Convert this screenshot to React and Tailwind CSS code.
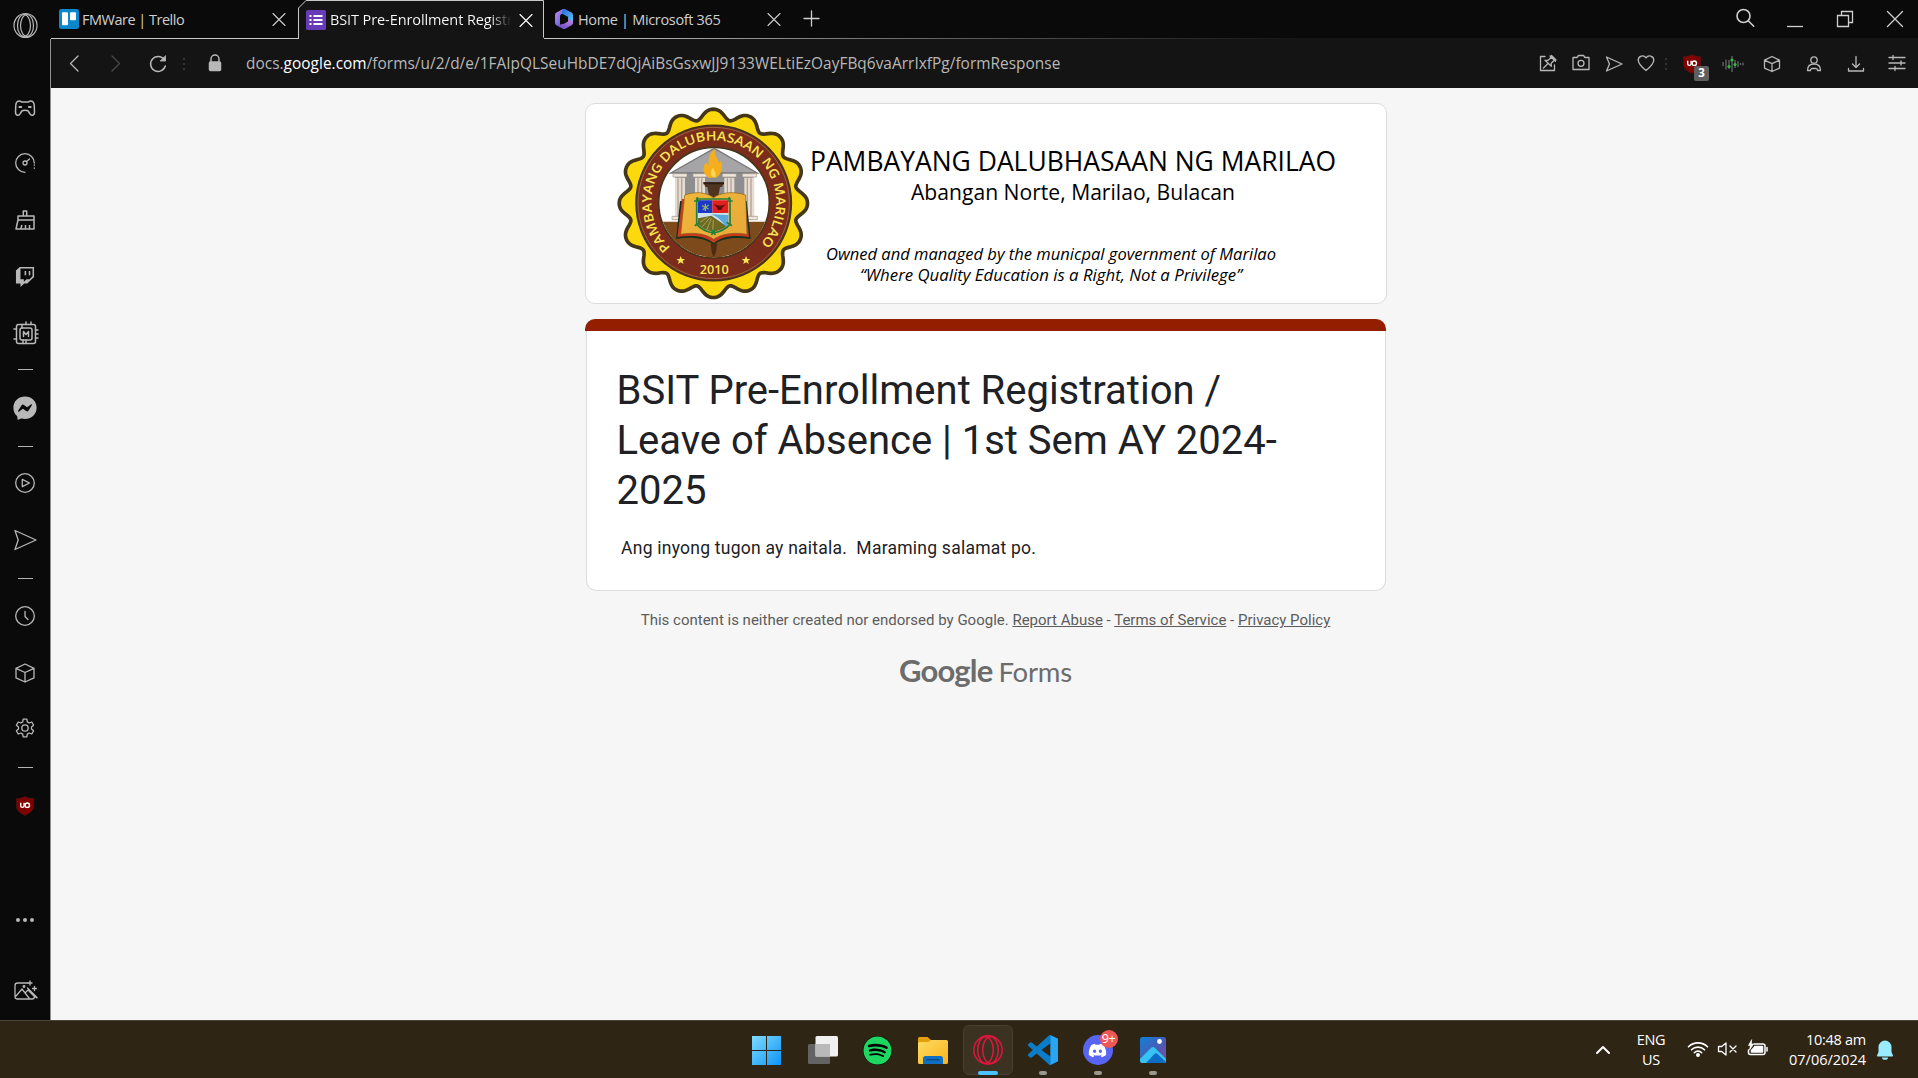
import React from "react";
import { FaTwitch, FaFacebookMessenger, FaSpotify, FaDiscord } from "react-icons/fa";

const line = {
  fill: "none",
  stroke: "currentColor",
  strokeWidth: 1.3,
  strokeLinecap: "round",
  strokeLinejoin: "round",
};

function Icon({ className = "", children, ...rest }) {
  return (
    <svg viewBox="0 0 24 24" className={`h-6 w-6 shrink-0 ${className}`} {...line} {...rest}>
      {children}
    </svg>
  );
}

const Close = ({ className = "" }) => (
  <Icon className={className} strokeWidth="1.1">
    <path d="M6 6.500l12 12M18 6.500L6 18.500" />
  </Icon>
);

const Cube = ({ className = "" }) => (
  <Icon className={className}>
    <path d="M12 3l9 4.3v9.6L12 21l-9-4.1V7.3zM3 7.3l9 4.2 9-4.2M12 11.5V21" />
  </Icon>
);

const Send = ({ className = "" }) => (
  <Icon className={className}>
    <path d="M2 2.5L23 12 2 21.5 5.2 12z" />
  </Icon>
);

const UBlock = ({ className = "" }) => (
  <svg viewBox="0 0 20 20" className={`shrink-0 ${className}`}>
    <path d="M10 .6c2.600 1.600 5.400 2 8.600 2v7.600c0 4-3.200 6.600-8.600 9.200-5.400-2.600-8.600-5.200-8.600-9.200V2.600c3.200 0 6-.4 8.600-2z" fill="#800000" stroke="#4a1a1a" strokeWidth=".6" />
    <path d="M5.700 6.800v2.900a1.700 1.700 0 003.400 0V6.800" fill="none" stroke="#fff" strokeWidth="1.400" />
    <circle cx="12.300" cy="9.200" r="2.200" fill="none" stroke="#fff" strokeWidth="1.400" />
  </svg>
);

const Dash = ({ className = "" }) => <div className={`h-px w-[15px] shrink-0 bg-[#b4b4b4] ${className}`} />;

function Sidebar() {
  return (
    <aside className="flex w-[51px] shrink-0 flex-col items-center bg-[#0a0a0a] pr-px text-[#b8b8b8]">
      <Icon className="mt-[13px] overflow-visible" strokeWidth="1.2">
        <ellipse cx="12.500" cy="12.500" rx="11.500" ry="12" />
        <ellipse cx="11" cy="12.500" rx="6.500" ry="11" />
        <ellipse cx="14" cy="12.500" rx="6.500" ry="11" />
      </Icon>
      <Icon className="mt-[59px] -ml-px" strokeWidth="1.500">
        <path d="M6.500 5C4 5 3 6.500 2.800 9L2.500 16c0 4 3.500 4.300 4.800 1.500L8.800 15c.8-1 5.600-1 6.400 0l1.500 2.500c1.300 2.800 4.800 2.500 4.800-1.500l-.3-7c-.2-2.500-1.200-4-3.700-4-1.500 0-1.600 1-2.700 1H9.200C8.100 6 8 5 6.500 5z" />
        <path d="M6.500 11h1.600M16 11h1.600" strokeWidth="2.200" />
      </Icon>
      <Icon className="mt-[31px] -ml-px">
        <path d="M12 21.300A9.300 9.300 0 1121.300 12" />
        <circle cx="12" cy="12" r="2" />
        <path d="M13.500 10.500L16.500 8M21.300 14v.3M21.300 17v.3" />
      </Icon>
      <Icon className="mt-[33px]" strokeLinecap="butt" strokeWidth="1.500">
        <path d="M10.300 8V3h3.400v5M5 8h16v4H5zM5 12L3 21h18v-9M8 21l.8-4M12.500 21v-4M16.500 21v-4" />
      </Icon>
      <FaTwitch className="mt-[33px] h-6 w-6 shrink-0 px-[2px]" />
      <Icon className="mt-[33px] ml-[2px] overflow-visible" strokeWidth="1.500">
        <rect x="2.500" y="2.500" width="19" height="19" rx="2" />
        <rect x="6" y="6" width="12" height="12" rx="2" />
        <path d="M9.500 14.500v-5l2.500 3 2.500-3v5M12 0v2.500M17 0v2.500M0 7h2.500M0 17h2.500M21.500 8H24M21.500 12H24M21.500 16H24M9 18v3.500M12 18v3.500M8 2.500V6" />
      </Icon>
      <Dash className="mt-[23px]" />
      <FaFacebookMessenger className="mt-[26px] h-6 w-6 shrink-0" />
      <Dash className="mt-[26px]" />
      <Icon className="mt-6 -ml-px">
        <circle cx="12" cy="12" r="9.300" />
        <path d="M9.300 8.300l7.200 3.700-7.200 3.700z" />
      </Icon>
      <Send className="mt-[33px]" />
      <Dash className="mt-[26px]" />
      <Icon className="mt-[25px] -ml-px">
        <circle cx="12" cy="12" r="9.300" />
        <path d="M12 7.500v5l3 3" />
      </Icon>
      <Cube className="mt-[33px] -ml-px" />
      <Icon className="mt-[31px] -ml-px">
        <path d="M10.200 3.200h3.600l.5 2.700 1.900 1.100 2.600-1 1.800 3.200-2.100 1.700v2.200l2.100 1.700-1.800 3.200-2.600-1-1.900 1.100-.5 2.700h-3.600l-.5-2.700L7.800 17l-2.600 1-1.800-3.200 2.100-1.700v-2.200L3.400 9.200 5.200 6l2.600 1 1.900-1.100z" />
        <circle cx="12" cy="12" r="3.200" />
      </Icon>
      <Dash className="mt-[27px]" />
      <UBlock className="mt-[28px] h-5 w-5" />
      <Icon className="mt-[92px]" fill="currentColor" stroke="none">
        <circle cx="5" cy="12" r="2" />
        <circle cx="12" cy="12" r="2" />
        <circle cx="19" cy="12" r="2" />
      </Icon>
      <Icon className="mt-[47px] overflow-visible">
        <path d="M15 4H4.500A2.500 2.500 0 002 6.500v11A2.500 2.500 0 004.500 20H19a2.500 2.500 0 002.500-2M3 17l6-7 7 9M12 14l3-3 6 6 3 2M14.500 9L24 18.500" />
        <circle cx="11" cy="7.500" r=".8" fill="currentColor" />
        <path d="M17 2v4M15 4h4M21.500 7.500v4M19.500 9.500h4" />
      </Icon>
    </aside>
  );
}

function TabStrip() {
  const tabText = "whitespace-nowrap font-['Open_Sans',sans-serif] text-[14.5px] leading-5";
  return (
    <div className="flex h-[39px] shrink-0 bg-[#0a0a0a] text-[#cfcfcf]">
      <div className="flex w-[247px] shrink-0 items-center border-b border-[#c8c8c8] pl-2">
        <svg viewBox="0 0 20 20" className="h-5 w-5 shrink-0">
          <rect width="20" height="20" rx="2.500" fill="#0c87cc" />
          <rect x="3" y="3.200" width="6" height="13" rx="1" fill="#fff" />
          <rect x="11" y="3.200" width="6" height="8" rx="1" fill="#fff" />
        </svg>
        <span className={`ml-[3px] pt-px tracking-[-0.5px] ${tabText}`}>FMWare | Trello</span>
        <Close className="mr-[7px] ml-auto" />
      </div>
      <div className="relative flex w-[246px] shrink-0 items-center bg-[#141414] pl-2">
        <svg viewBox="0 0 246 39" className="absolute inset-0 h-[39px] w-[246px]">
          <path d="M0 0h7.500L0 8z" fill="#0a0a0a" />
          <path d="M.5 39V8L8 .5h237.500V37l1 1.500" fill="none" stroke="#c8c8c8" />
        </svg>
        <svg viewBox="0 0 20 20" className="relative h-5 w-5 shrink-0">
          <rect width="20" height="20" rx="1.500" fill="#673ab7" />
          <path d="M7.500 6h9M7.500 10h9M7.500 14h9M3.500 6h2M3.500 10h2M3.500 14h2" stroke="#fff" strokeWidth="2" />
        </svg>
        <span className={`relative ml-1 w-[182px] overflow-hidden bg-linear-to-r from-white from-88% to-[#141414] bg-clip-text tracking-[-0.1px] text-transparent ${tabText}`}>
          BSIT Pre-Enrollment Registr
        </span>
        <Close className="relative mr-1.5 ml-auto text-white" />
      </div>
      <div className="flex flex-1 flex-col">
        <div className="flex flex-1 items-center">
          <svg viewBox="0 0 20 20" className="ml-[10px] h-5 w-5 shrink-0">
            <defs>
              <linearGradient id="mA" x1="0" y1="0" x2="1" y2="1">
                <stop offset="0" stopColor="#c58af0" />
                <stop offset="1" stopColor="#3b5bd0" />
              </linearGradient>
              <linearGradient id="mB" x1="0" y1="0" x2="1" y2="1">
                <stop offset="0" stopColor="#2c66d8" />
                <stop offset="1" stopColor="#58c8f4" />
              </linearGradient>
              <linearGradient id="mC" x1="0" y1="1" x2="1" y2="0">
                <stop offset="0" stopColor="#5a3fb8" />
                <stop offset="1" stopColor="#c58ce8" />
              </linearGradient>
            </defs>
            <path d="M9 0L2.500 3.600Q1 4.500 1 6.200v7.600q0 1.700 1.500 2.500l3.500 2V7.500Q6 5.800 7.500 5L12 2.400z" fill="url(#mA)" />
            <path d="M9 0q1.200-.5 2.400.2l6.100 3.400Q19 4.500 19 6.200V13l-5-3V7.800L8 4.700V3z" fill="url(#mB)" />
            <path d="M2.500 16.300l6.100 3.400q1.400.7 2.800 0l6.100-3.400Q19 15.500 19 13.800V12l-5-2v2.500l-4 2.300z" fill="url(#mC)" />
          </svg>
          <span className={`ml-1 pt-px tracking-[-0.33px] ${tabText}`}>Home | Microsoft 365</span>
          <Close className="ml-[41px]" />
          <Icon className="mb-[3px] ml-[13px]">
            <path d="M12.500 5v15M5 12.500h15" />
          </Icon>
          <Icon className="mr-[26px] mb-0.5 ml-auto" strokeWidth="1.600">
            <circle cx="10.500" cy="10" r="6.500" />
            <path d="M15.200 14.700l5.500 5.500" />
          </Icon>
          <Icon className="mr-[26px]" strokeLinecap="butt">
            <path d="M4 19.500h16" />
          </Icon>
          <Icon className="mr-[26px]" strokeLinejoin="miter">
            <path d="M4.500 8.500h11v11h-11zM8.500 8.500v-4h11v11h-4" />
          </Icon>
          <Icon className="mr-[11px]">
            <path d="M4.500 4.500l15 15M19.500 4.500l-15 15" />
          </Icon>
        </div>
        <div className="h-px bg-linear-to-r from-[#c8c8c8] to-[#141414] to-55%" />
      </div>
    </div>
  );
}

const Grip = ({ className = "" }) => (
  <div className={`flex w-0.5 flex-col gap-[3px] ${className}`}>
    <i className="h-0.5 bg-[#333]" />
    <i className="h-0.5 bg-[#333]" />
    <i className="h-0.5 bg-[#333]" />
  </div>
);

function Toolbar() {
  return (
    <div className="flex h-[49px] shrink-0 items-center bg-[#141414] pl-3 text-[#b8b8b8]">
      <Icon>
        <path d="M15 4L7.500 11.500 15 19" />
      </Icon>
      <Icon className="ml-4 text-[#484848]">
        <path d="M9 4l7.500 7.500L9 19" />
      </Icon>
      <Icon className="ml-[19px]" strokeWidth="1.500">
        <path d="M18.500 8a7.500 7.500 0 10.800 6" />
        <path d="M19.500 4v5h-5z" fill="currentColor" strokeWidth=".8" />
      </Icon>
      <Grip className="ml-[13px]" />
      <Icon className="mb-0.5 ml-[18px]" strokeWidth="1.500">
        <rect x="6.500" y="11" width="11" height="8.500" rx="1" fill="currentColor" />
        <path d="M8 11V8a4 4 0 018 0v3" />
      </Icon>
      <span className="ml-[19px] pt-px font-['Open_Sans',sans-serif] text-[15.4px] leading-6 tracking-[0.035px] whitespace-nowrap">
        docs.<span className="text-white">google.com</span>/forms/u/2/d/e/1FAIpQLSeuHbDE7dQjAiBsGsxwJJ9133WELtiEzOayFBq6vaArrIxfPg/formResponse
      </span>
      <div className="ml-auto flex items-center pr-[9px]">
        <Icon className="mr-[9px] mb-px">
          <path d="M9 5.500H4.500v14h14V14" />
          <path d="M14 5l5.500 5.200M15.500 4.500l4.500 4.500-1.800.3-3 3 .1 3-6.300-6 3 .1 3.200-3.200zM12 12.500l-4.500 4.500" />
        </Icon>
        <Icon className="mr-[9px] mb-px">
          <path d="M4 6.500h4l1.500-2h5l1.500 2h4v12H4z" />
          <circle cx="12" cy="12.300" r="3" />
        </Icon>
        <Icon className="mr-2">
          <path d="M4.500 5L20 12 4.500 19 7.500 12z" />
        </Icon>
        <Icon className="mb-0.5">
          <path d="M12 19.500C7 15.500 4.200 12.500 4.200 9A4.200 4.200 0 0112 7a4.200 4.200 0 017.800 2c0 3.500-2.800 6.500-7.800 10.500z" />
        </Icon>
        <Grip className="ml-[7px]" />
        <div className="relative ml-[13px] flex h-6 w-6 items-center justify-center">
          <UBlock className="h-5 w-5" />
          <span className="absolute top-[14px] left-[14px] flex h-[15px] w-[15px] items-center justify-center rounded-[2px] bg-[#5f5f5f] font-['Open_Sans',sans-serif] text-[11.5px] font-bold text-white">
            3
          </span>
        </div>
        <Icon className="ml-4 text-[#666]" strokeLinecap="butt" strokeWidth="1.300">
          <path d="M3 10v4M6 7.500v10M9 8v9M12 4v16M15 8v8M18 9v6M20.500 11v2M23 10.500v3" />
          <g fill="#2bbf3c" stroke="none">
            <circle cx="9" cy="14.500" r="1.600" />
            <circle cx="12" cy="8" r="1.600" />
            <circle cx="15" cy="12.500" r="1.600" />
          </g>
        </Icon>
        <svg viewBox="0 0 24 24" className="ml-4 h-5 w-6" {...line} strokeWidth="1.500">
          <path d="M12 3l9 4.300v9.600L12 21l-9-4.100V7.300zM3 7.300l9 4.200 9-4.200M12 11.500V21" />
        </svg>
        <Icon className="ml-[18px]">
          <circle cx="12" cy="8" r="3.200" />
          <path d="M5.500 18.500c0-4.500 2.500-6.500 6.500-6.500s6.500 2 6.500 6.500h-3c0-1-.8-2-1.500-2h-4c-.7 0-1.500 1-1.500 2z" />
        </Icon>
        <Icon className="ml-[18px]">
          <path d="M12 4.500v11M8.500 12l3.500 3.500 3.500-3.500M4.500 16.500v2.500h15v-2.500" />
        </Icon>
        <Icon className="mb-px ml-[17px]">
          <path d="M4 6.500h16M4 12h16M4 17.500h16M8 4.500v4M16 10v4M10 15.500v4" />
        </Icon>
      </div>
    </div>
  );
}

/* Scalloped rosette outline: lobes with flattened crests around the seal's centre. */
const scallop =
  Array.from({ length: 320 }, (_, i) => {
    const a = (i / 320) * Math.PI * 2;
    const r = 269.5 + 15 * Math.cos(16 * a) - 2 * Math.cos(32 * a);
    return `${i ? "L" : "M"}${(400 + r * Math.sin(a)).toFixed(1)} ${(325 - r * Math.cos(a)).toFixed(1)}`;
  }).join("") + "Z";

const STAR = "M0-13L3.500-4H13L5.500 2 8.500 11 0 5.500-8.500 11-5.500 2-13-4H-3.500z";

function Seal(props) {
  return (
    <svg viewBox="110 35 580 580" {...props}>
      <defs>
        <clipPath id="sealInner">
          <circle cx="402" cy="323" r="164" />
        </clipPath>
        <path id="sealArc" d="M271.800 457.800A187 187 0 1 1 531 457.800" />
        <linearGradient id="page" x1="0" y1="0" x2="1" y2="1">
          <stop offset="0" stopColor="#f0b83c" />
          <stop offset="1" stopColor="#e8a838" />
        </linearGradient>
      </defs>
      <path d={scallop} fill="#fcd90c" stroke="#43361a" strokeWidth="11" />
      <circle cx="401" cy="324" r="233" fill="#7b2c1b" stroke="#43361a" strokeWidth="5" />
      <circle cx="401" cy="324" r="227" fill="none" stroke="#a8805c" strokeWidth="2" />
      <circle cx="402" cy="323" r="166" fill="#fff" stroke="#43361a" strokeWidth="5" />
      <g clipPath="url(#sealInner)">
        <path d="M230 380h345v120H230z" fill="#7d4a1c" />
        <path d="M285 235h235v140H285z" fill="#8e8e90" />
        <path d="M403 160L532 234H272z" fill="#a5a5a8" stroke="#77777a" strokeWidth="4" />
        {[300, 360, 448, 508].map((x) => (
          <g key={x}>
            <path d={`M${x - 15} 248h30v116h-30z`} fill="#e6ddd2" />
            <path d={`M${x - 6} 250v114M${x + 5} 250v114`} stroke="#b3a294" strokeWidth="4" />
            <path d={`M${x - 21} 236h42v10h-42zM${x - 24} 364h48v10h-48z`} fill="#efe7dc" stroke="#a39384" strokeWidth="2" />
          </g>
        ))}
        <path d="M392 445h20l-4 26-7 16-6-16z" fill="#4e2b12" />
      </g>
      <path d="M370 262h62l-6 14h-6l-6 32h-26l-6-32h-6z" fill="#4f3420" />
      <path d="M370 262h62v6h-62z" fill="#2f1e12" />
      <path d="M386 248c-18-10-20-32-8-46 3 6 5 8 8 9-2-22 6-40 18-50-2 20 10 30 14 44 3-3 4-6 4-10 8 22 4 43-14 53z" fill="#f5ae1c" />
      <path d="M398 246c-8-8-6-20 2-28 2 10 10 14 6 28z" fill="#fbd65a" />
      <path d="M300 318l-12 114c42-8 84-4 112 16 32-20 70-22 112-16l-12-114z" fill="#14331f" />
      <path d="M306 312l-14 114c42-6 82-4 109 18 28-22 66-24 106-18l-12-114z" fill="#c63a1e" />
      <path d="M314 300l-12 118c40-7 76-2 99 15 25-17 62-22 100-15l-4-118c-36-12-76-8-96 8-22-16-52-20-87-8z" fill="url(#page)" stroke="#8a5c1a" strokeWidth="2" />
      <path d="M354 316h91v72q-16 18-45 22-30-4-46-22z" fill="#cfe3ee" />
      <path d="M354 316h43v38h-43z" fill="#1b37c8" />
      <path d="M397 316h48v38h-48z" fill="#e0201c" />
      <path d="M376 326v22M366 332l20 10M386 330l-18 14" stroke="#8fae6a" strokeWidth="4" />
      <path d="M402 328q19 8 36 0l-10 9-4 8h-10l-4-8z" fill="#5c0d0d" />
      <path d="M354 370l40-8 46 32q-14 12-40 16-30-4-46-22z" fill="#6e6a24" />
      <path d="M394 358l51 2v28l-8 8q-14-26-43-38z" fill="#5aa9dc" />
      <path d="M354 386l30-20M364 398l26-30M380 406l14-36M398 408l2-34" stroke="#c9bd6a" strokeWidth="2" />
      <path d="M350 312h100v76q-18 20-50 26-32-6-50-26zM342 318h16M442 318h16M352 306v14M448 306v14M344 392l16-10M456 392l-16-10M394 404l12 16M406 404l-12 16" fill="none" stroke="#23803a" strokeWidth="5" />
      <g fill="#f8e64e" fontFamily="'Open Sans', sans-serif" fontWeight="600">
        <text fontSize="39">
          <textPath href="#sealArc" textLength="872" lengthAdjust="spacingAndGlyphs">
            PAMBAYANG DALUBHASAAN NG MARILAO
          </textPath>
        </text>
        <text x="359" y="537" fontSize="39" textLength="87" lengthAdjust="spacingAndGlyphs">
          2010
        </text>
        <path d={STAR} transform="translate(302 496)" />
        <path d={STAR} transform="translate(498 496)" />
      </g>
    </svg>
  );
}

function Banner() {
  return (
    <section className="h-[201px] w-[802px] overflow-hidden rounded-[10px] border border-[#dadce0] bg-white">
      <svg viewBox="586 104 800 199" className="h-[199px] w-[800px]">
        <Seal x="616.700" y="106.700" width="193.300" height="193.300" />
        <g fill="#000" fontFamily="'Open Sans', sans-serif">
          <text x="810" y="170.700" fontSize="27" textLength="526" lengthAdjust="spacingAndGlyphs">
            PAMBAYANG DALUBHASAAN NG MARILAO
          </text>
          <text x="911" y="199.500" fontSize="21" textLength="324" lengthAdjust="spacingAndGlyphs">
            Abangan Norte, Marilao, Bulacan
          </text>
          <g fontStyle="italic" fontSize="16.500">
            <text x="826" y="260" textLength="450" lengthAdjust="spacingAndGlyphs">
              Owned and managed by the municpal government of Marilao
            </text>
            <text x="860" y="281.300" textLength="382" lengthAdjust="spacingAndGlyphs">
              “Where Quality Education is a Right, Not a Privilege”
            </text>
          </g>
        </g>
      </svg>
    </section>
  );
}

function FormPage() {
  return (
    <main className="flex flex-1 flex-col bg-[#f6f6f6] pt-[15px] pl-[534px] font-[Roboto,sans-serif]">
      <Banner />
      <section className="mt-[15px] w-[801px]">
        <div className="h-3 rounded-t-[10px] bg-[#941e00]" />
        <div className="ml-px h-[260px] rounded-b-[10px] border border-t-0 border-[#dadce0] bg-white pt-[35px] pr-16 pl-[29.5px] text-[#202124]">
          <h1 className="text-[40px] leading-[50px] tracking-[-0.01px]">
            BSIT Pre-Enrollment Registration /
            <br />
            Leave of Absence | 1st Sem AY 2024-
            <br />
            2025
          </h1>
          <p className="mt-5 text-[17.5px] leading-[25px] tracking-[0.24px] whitespace-pre">
            {" Ang inyong tugon ay naitala.  Maraming salamat po."}
          </p>
        </div>
      </section>
      <footer className="flex w-[801px] flex-col items-center">
        <p className="mt-[19px] text-[15px] leading-5 text-[#5c5c5c]">
          This content is neither created nor endorsed by Google. <a className="underline">Report Abuse</a> -{" "}
          <a className="underline">Terms of Service</a> - <a className="underline">Privacy Policy</a>
        </p>
        <div className="mt-5 flex items-baseline gap-[6px] font-[Lato,sans-serif] leading-10 text-[#6c6c6c]">
          <span className="text-[31px] font-bold tracking-[-0.85px]">Google</span>
          <span className="text-[27.5px] tracking-[-0.2px]">Forms</span>
        </div>
      </footer>
    </main>
  );
}

function OperaRed() {
  return (
    <svg viewBox="0 0 30 30" className="h-[30px] w-[30px]" fill="none" stroke="#e0163f" strokeWidth="1.500">
      <circle cx="15" cy="15" r="14.200" />
      <ellipse cx="12.500" cy="15" rx="7.800" ry="13.300" />
      <ellipse cx="17.500" cy="15" rx="7.800" ry="13.300" />
    </svg>
  );
}

const Slot = ({ children, running }) => (
  <div className="relative flex h-full w-[55px] items-center justify-center pt-px">
    {children}
    {running && <i className="absolute bottom-[3px] h-1 w-2 rounded-full bg-[#9c978c]" />}
  </div>
);

function Taskbar() {
  return (
    <div className="flex h-[58px] shrink-0 border-t border-[#4a4335] bg-[#2f2514] pl-[739px] text-white">
      <Slot>
        <svg viewBox="0 0 29 29" className="h-[29px] w-[29px]">
          <defs>
            <linearGradient id="win" gradientUnits="userSpaceOnUse" x1="0" y1="0" x2="29" y2="29">
              <stop offset="0" stopColor="#7fdcff" />
              <stop offset="1" stopColor="#0c94f5" />
            </linearGradient>
          </defs>
          <path d="M0 0h14v14H0zM15 0h14v14H15zM0 15h14v14H0zM15 15h14v14H15z" fill="url(#win)" />
        </svg>
      </Slot>
      <Slot>
        <svg viewBox="0 0 30 28" className="ml-0.5 h-7 w-[30px]">
          <rect y="8" width="22" height="20" rx="1.500" fill="#636363" />
          <rect x="7.500" width="22.500" height="20.500" rx="1.500" fill="#f0f0f0" />
          <rect x="7.500" y="8" width="14.500" height="12.500" fill="#b9b9b9" />
        </svg>
      </Slot>
      <div className="w-px" />
      <Slot>
        <span className="flex h-[29px] w-[29px] items-center justify-center rounded-full bg-black text-[#1ed760]">
          <FaSpotify className="h-[29px] w-[29px]" />
        </span>
      </Slot>
      <Slot>
        <svg viewBox="0 0 30 27" className="h-[27px] w-[30px]">
          <defs>
            <linearGradient id="fold" x1="0" y1="0" x2="1" y2="1">
              <stop offset="0" stopColor="#ffdc62" />
              <stop offset="1" stopColor="#f9b31c" />
            </linearGradient>
          </defs>
          <path d="M0 1.500Q0 0 1.500 0H9.500L13 3v5H0z" fill="#e3a00c" />
          <path d="M0 6.500Q0 5 1.500 5H10l3-2h15.500Q30 3 30 4.500v21q0 1.500-1.500 1.500h-27Q0 27 0 25.500z" fill="url(#fold)" />
          <path d="M5 27v-5.500Q5 19 7.500 19h15q2.500 0 2.500 2.500V27z" fill="#0f6fc0" />
          <path d="M8.500 22.700h13" stroke="#0a4a88" strokeWidth="1.400" />
        </svg>
      </Slot>
      <div className="relative flex h-full w-[55px] items-center justify-center pt-px">
        <div className="flex h-[50px] w-[50px] items-center justify-center rounded-md border border-[#484030] bg-[#3b3222]">
          <OperaRed />
        </div>
        <i className="absolute bottom-[3px] h-1 w-5 rounded-full bg-[#4cc2ff]" />
      </div>
      <Slot running>
        <svg viewBox="0 0 24 24" className="h-[30px] w-[30px]">
          <path
            d="M23.150 2.587L18.210.210a1.494 1.494 0 00-1.705.290l-9.460 8.630-4.120-3.128a.999.999 0 00-1.276.057L.327 7.261A1 1 0 00.326 8.740L3.899 12 .326 15.260a1 1 0 00.001 1.479L1.650 17.940a.999.999 0 001.276.057l4.120-3.128 9.460 8.630a1.492 1.492 0 001.704.290l4.942-2.377A1.500 1.500 0 0024 20.060V3.939a1.500 1.500 0 00-.850-1.352zm-5.146 14.861L10.826 12l7.178-5.448v10.896z"
            fill="#0a7cc8"
          />
          <path d="M18 .1L24 3v18l-6 2.900z" fill="#2aa5f2" />
        </svg>
      </Slot>
      <Slot running>
        <div className="relative flex h-[30px] w-[30px] items-center justify-center rounded-full bg-[#5865f2]">
          <FaDiscord className="h-[19px] w-[19px]" />
          <span className="absolute -top-[5px] left-[17px] flex h-[18px] w-[18px] items-center justify-center rounded-full bg-[#ef5757] font-['Open_Sans',sans-serif] text-[12.5px] font-medium tracking-[-0.5px]">
            9+
          </span>
        </div>
      </Slot>
      <Slot running>
        <svg viewBox="0 0 26 26" className="h-[26px] w-[26px]">
          <defs>
            <linearGradient id="ph" x1="0" y1="0" x2="1" y2="1">
              <stop offset="0" stopColor="#0f7fd8" />
              <stop offset=".6" stopColor="#5058b0" />
              <stop offset="1" stopColor="#8a4ca0" />
            </linearGradient>
            <clipPath id="phc">
              <rect width="26" height="26" rx="2.500" />
            </clipPath>
          </defs>
          <g clipPath="url(#phc)">
            <rect width="26" height="26" fill="url(#ph)" />
            <path d="M0 22l11-11q2-2 4 0l11 11v4H0z" fill="#36c3f4" />
            <path d="M6 26l8.500-9q1.500-1.500 3 0L26 25v1z" fill="#0d6cc4" />
            <circle cx="19.500" cy="4.500" r="2.400" fill="#fff" />
          </g>
        </svg>
      </Slot>
      <div className="ml-auto flex items-center pt-px font-['Open_Sans',sans-serif] text-[14.5px] leading-5">
        <Icon strokeWidth="2">
          <path d="M6 15l6-6 6 6" />
        </Icon>
        <div className="ml-5 w-8 text-center tracking-[-0.3px]">
          ENG
          <br />
          US
        </div>
        <svg viewBox="0 0 24 24" className="mb-0.5 ml-[19px] h-6 w-6" {...line} strokeWidth="1.600">
          <path d="M2.500 9.800a13.400 13.400 0 0119 0M5.500 12.800a9.200 9.200 0 0113 0M8.300 15.700a5.200 5.200 0 017.400 0" />
          <circle cx="12" cy="18" r="1.200" fill="currentColor" />
        </svg>
        <Icon className="mb-0.5 ml-[6px]">
          <path d="M2.500 9.500h3.200L10 6v12l-4.300-3.500H2.500zM14 9l6 6M20 9l-6 6" />
        </Icon>
        <Icon className="mb-0.5 ml-[5px]" strokeWidth="1.500">
          <path d="M9 7h9a2 2 0 012 2v6.500a2 2 0 01-2 2H5.500a2 2 0 01-2-2V13M22 10.500v3.500" />
          <path d="M10 9.500h7.500V15H6.500v-1.500z" fill="currentColor" />
          <path d="M6.500 3L3.500 8.500h2L4.500 13l4-6H6.500z" fill="currentColor" strokeWidth=".7" />
        </Icon>
        <div className="ml-[10px] w-[87px] text-right">
          <span className="tracking-[-0.27px]">10:48 am</span>
          <br />
          07/06/2024
        </div>
        <svg viewBox="0 0 24 24" className="mr-[21px] ml-[7px] h-6 w-6" fill="#99ebff">
          <path d="M12 2.500a6.500 6.500 0 00-6.500 6.500v5L4 17.500q-.2 1 .8 1h14.400q1 0 .8-1L18.500 14V9A6.500 6.500 0 0012 2.500zM9 19.500a3 2.300 0 006 0z" />
        </svg>
      </div>
    </div>
  );
}

export default function App() {
  return (
    <div className="flex h-[1078px] w-[1918px] flex-col overflow-hidden">
      <div className="flex h-[1020px] shrink-0">
        <Sidebar />
        <div className="flex w-[1867px] flex-col">
          <TabStrip />
          <div className="-ml-px flex flex-1 flex-col border-l border-[#909090]">
            <Toolbar />
            <FormPage />
          </div>
        </div>
      </div>
      <Taskbar />
    </div>
  );
}
